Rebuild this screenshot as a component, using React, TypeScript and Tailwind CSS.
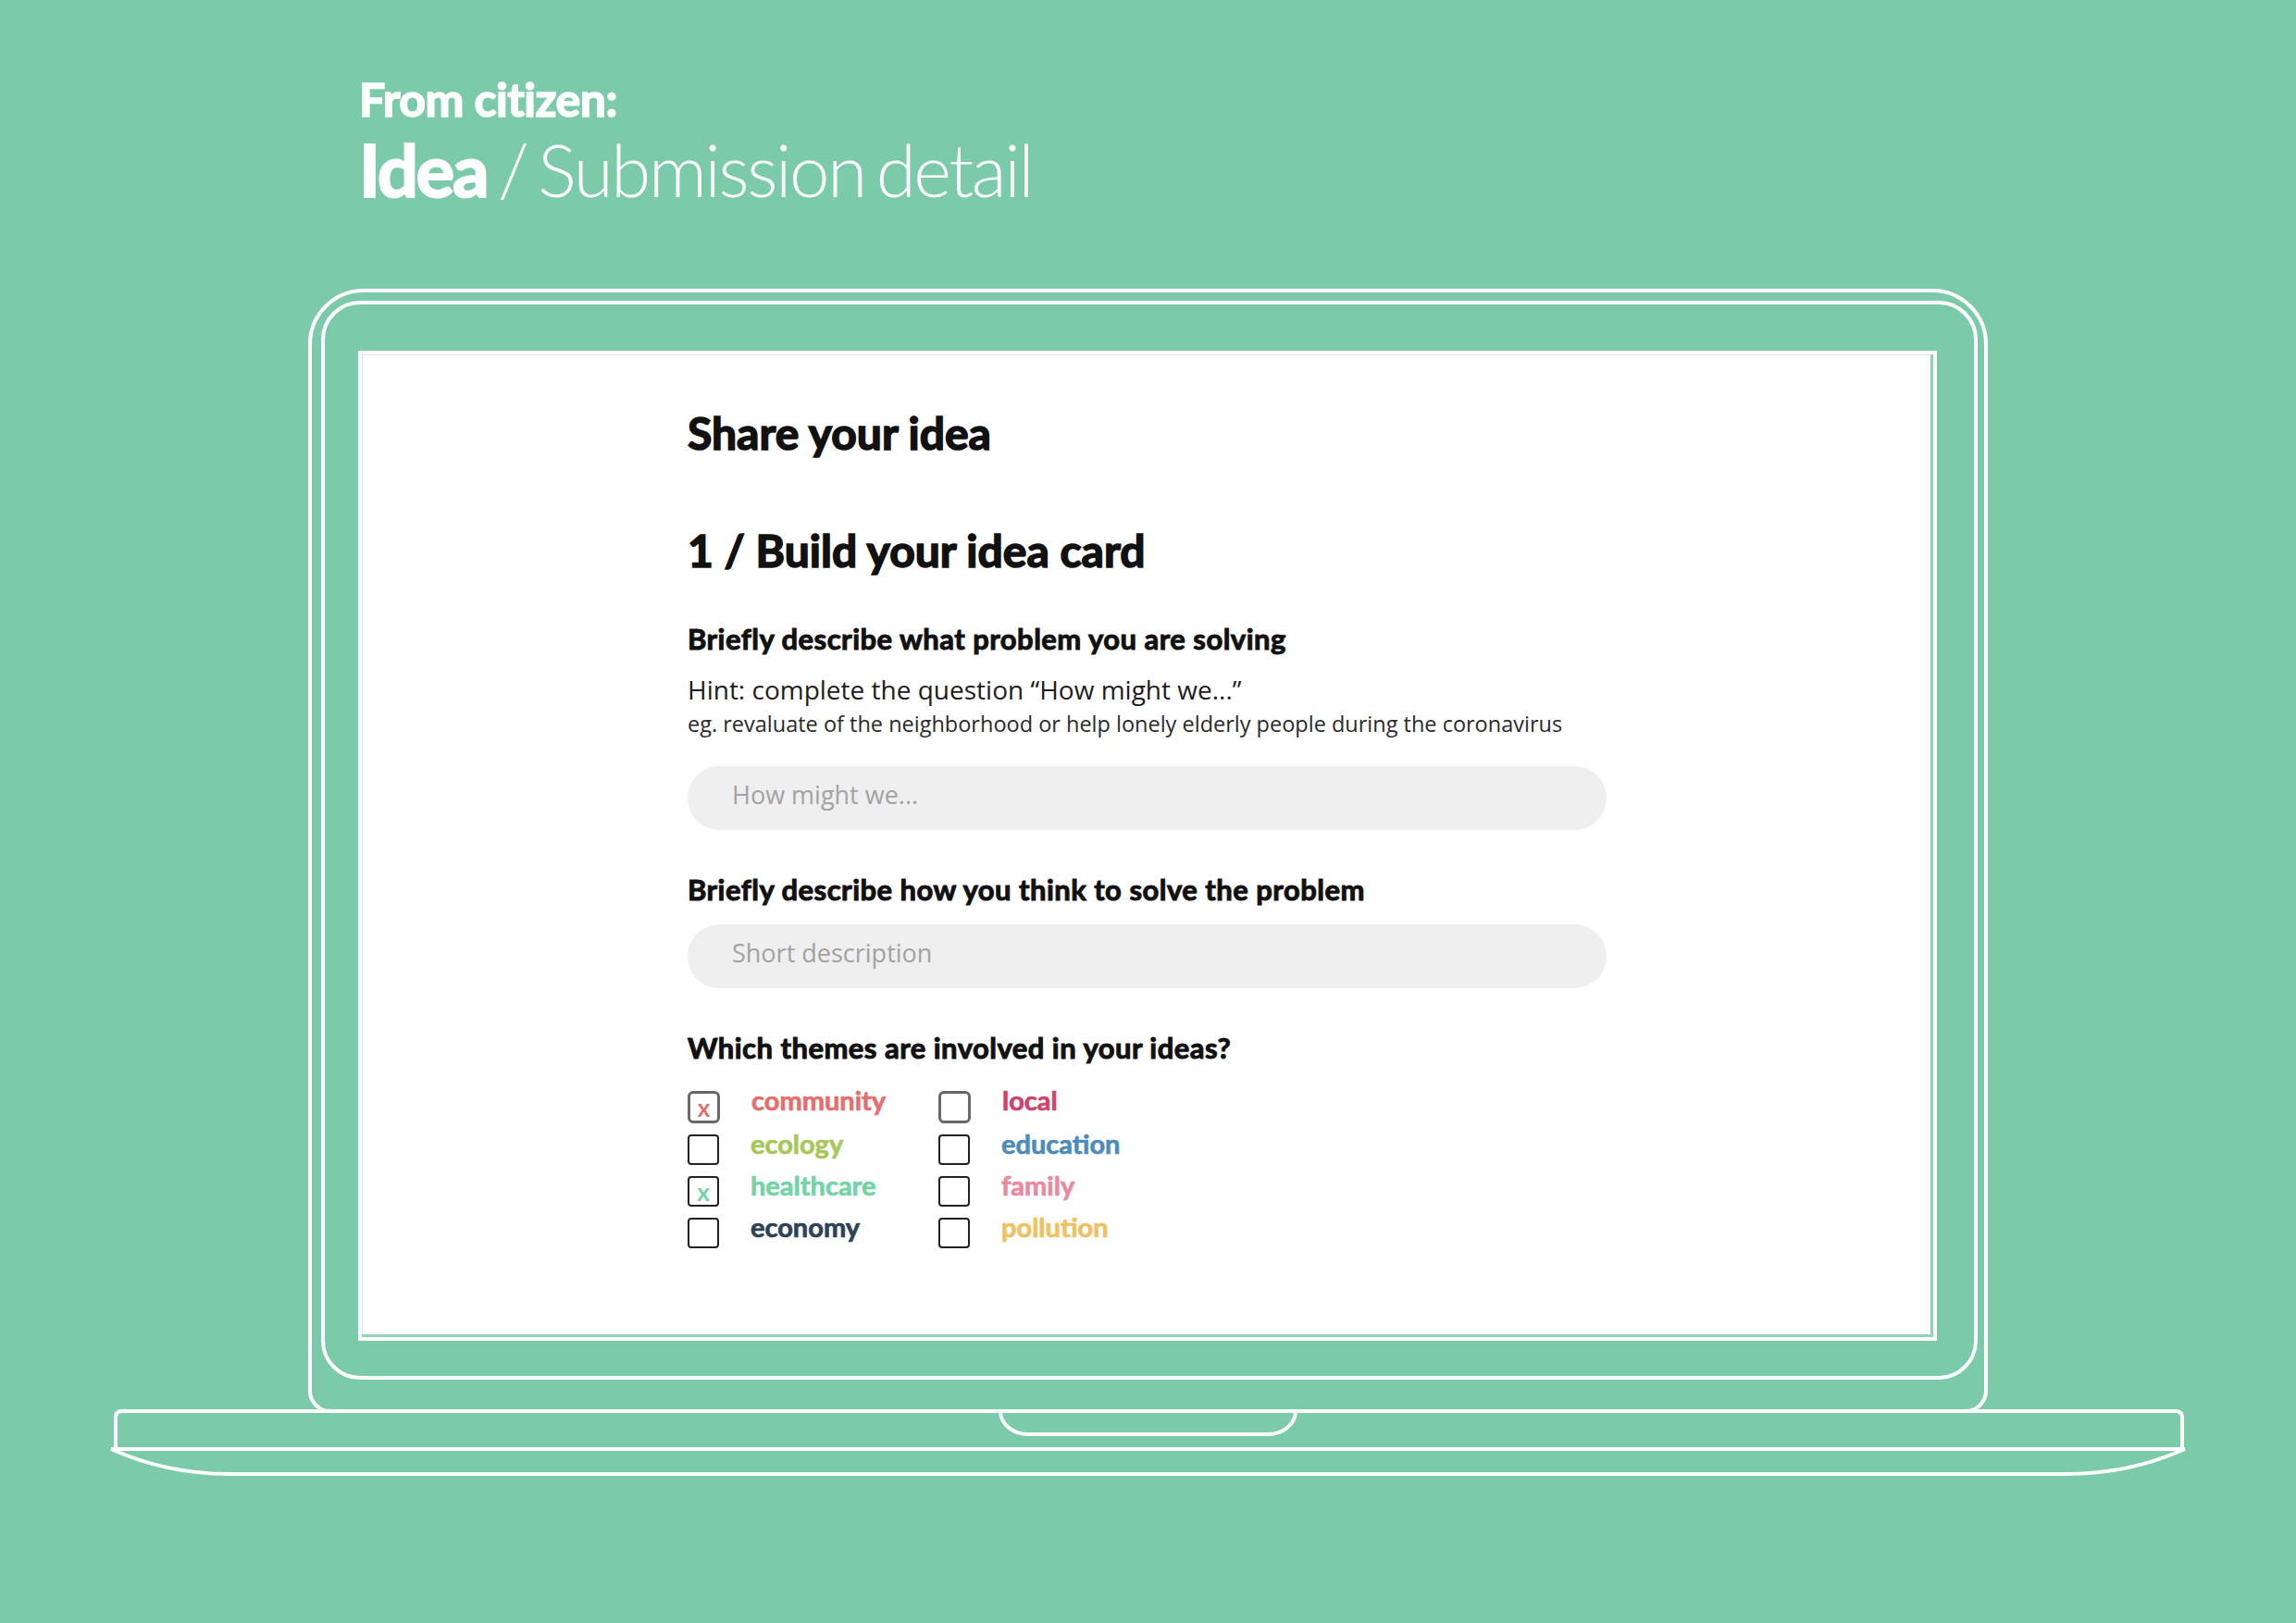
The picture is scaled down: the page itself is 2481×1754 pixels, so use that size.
const themes = [
  { label: 'community', color: 'text-[#e56f6f]', checked: true },
  { label: 'local', color: 'text-[#d0416b]', checked: false },
  { label: 'ecology', color: 'text-[#a6c85a]', checked: false },
  { label: 'education', color: 'text-[#4c8cbd]', checked: false },
  { label: 'healthcare', color: 'text-[#74d4a6]', checked: true },
  { label: 'family', color: 'text-[#e88b9f]', checked: false },
  { label: 'economy', color: 'text-[#2c4257]', checked: false },
  { label: 'pollution', color: 'text-[#efc160]', checked: false },
];

function CheckBox({ checked, color, strong }: { checked: boolean; color: string; strong: boolean }) {
  return (
    <span
      className={
        strong
          ? 'flex items-center justify-center shrink-0 w-[35px] h-[35px] border-[3px] border-[#686868] rounded-[6px]'
          : 'flex items-center justify-center shrink-0 w-[34px] h-[33px] border-[2.5px] border-[#222] rounded-[4px]'
      }
    >
      {checked && <span className={`${color} text-[26px] leading-[26px] font-bold`}>x</span>}
    </span>
  );
}

function LaptopBase() {
  return (
    <svg width="2245" height="74" viewBox="0 0 2245 74" fill="none" className="-mt-[4px] block">
      <g stroke="white" strokeWidth="4" fill="none">
        {/* base slab */}
        <path d="M7,43 V9 Q7,2 14,2 H2233 Q2240,2 2240,9 V43" />
        {/* trackpad notch */}
        <path d="M963,2 A30,25 0 0,0 993,27 H1252 A30,25 0 0,0 1282,2" />
        {/* bottom edge + lip */}
        <path d="M2,43 H2243" />
        <path d="M2,43 C40,60 80,70 130,70 H2115 C2165,70 2205,60 2243,43" />
      </g>
    </svg>
  );
}

export default function App() {
  return (
    <div className="min-h-screen w-full bg-[#7bcbaa] font-['Lato',sans-serif] pt-[82px] pb-[140px]">
      {/* Header */}
      <div className="pl-[388px] text-white">
        <h2 className="text-[50px] leading-[50px] font-bold tracking-[-0.01em] [-webkit-text-stroke:1.6px_currentColor]">
          From citizen:
        </h2>
        <h1 className="mt-[12px] text-[78px] leading-[78px] tracking-[-0.03em] [word-spacing:-0.09em]">
          <span className="font-bold [-webkit-text-stroke:2px_currentColor]">Idea</span>
          <span className="font-light"> / Submission detail</span>
        </h1>
      </div>

      {/* Laptop */}
      <div className="mt-[90px] flex flex-col items-center">
        <div className="border-[4px] border-white rounded-t-[60px] rounded-b-[24px] pt-[9px] pl-[10px] pr-[7px] pb-[32px]">
          <div className="border-[4px] border-white rounded-[42px] pt-[50px] pl-[36px] pr-[40px] pb-[38px]">
            <div className="w-[1706px] h-[1070px] border-[4px] border-white bg-[#8fd3b7]">
              <div className="h-[1059px] mr-[3px] bg-white border-t border-l border-[#dde6e2] pl-[351px] pt-[55px] text-[#111]">
                <h3 className="text-[48px] leading-[1.2] font-bold [-webkit-text-stroke:1.6px_currentColor]">
                  Share your idea
                </h3>
                <h3 className="mt-[69px] text-[48px] leading-[1.2] font-bold [-webkit-text-stroke:1.6px_currentColor]">
                  1 / Build your idea card
                </h3>

                <p className="mt-[49px] text-[31px] leading-[36px] font-bold tracking-[0.015em] [-webkit-text-stroke:1px_currentColor]">
                  Briefly describe what problem you are solving
                </p>
                <div className="font-['Open_Sans',sans-serif]">
                  <p className="mt-[23px] text-[28px] leading-[28px] text-[#1d1d1d]">
                    Hint: complete the question “How might we...”
                  </p>
                  <p className="mt-[10px] text-[23.5px] leading-[26px] text-[#2a2a2a]">
                    eg. revaluate of the neighborhood or help lonely elderly people during the coronavirus
                  </p>
                  <div className="mt-[33px] w-[993px] h-[69px] rounded-full bg-[#efefef] flex items-center pl-[48px] pb-[7px] text-[27px] text-[#a2a2a2]">
                    How might we...
                  </div>
                </div>

                <p className="mt-[46px] text-[31px] leading-[36px] font-bold tracking-[0.015em] [-webkit-text-stroke:1px_currentColor]">
                  Briefly describe how you think to solve the problem
                </p>
                <div className="mt-[20px] w-[993px] h-[69px] rounded-full bg-[#efefef] flex items-center pl-[48px] pb-[7px] font-['Open_Sans',sans-serif] text-[27px] text-[#a2a2a2]">
                  Short description
                </div>

                <p className="mt-[46px] text-[31px] leading-[36px] font-bold tracking-[0.015em] [-webkit-text-stroke:1px_currentColor]">
                  Which themes are involved in your ideas?
                </p>
                <div className="mt-[29px] grid grid-cols-[271px_auto] gap-y-[12px]">
                  {themes.map((t, i) => (
                    <div key={t.label} className="flex items-start gap-[34px]">
                      <CheckBox checked={t.checked} color={t.color} strong={i < 2} />
                      <span className={`${t.color} text-[29px] leading-[20px] font-bold [-webkit-text-stroke:0.7px_currentColor]`}>
                        {t.label}
                      </span>
                    </div>
                  ))}
                </div>
              </div>
            </div>
          </div>
        </div>
        <LaptopBase />
      </div>
    </div>
  );
}
